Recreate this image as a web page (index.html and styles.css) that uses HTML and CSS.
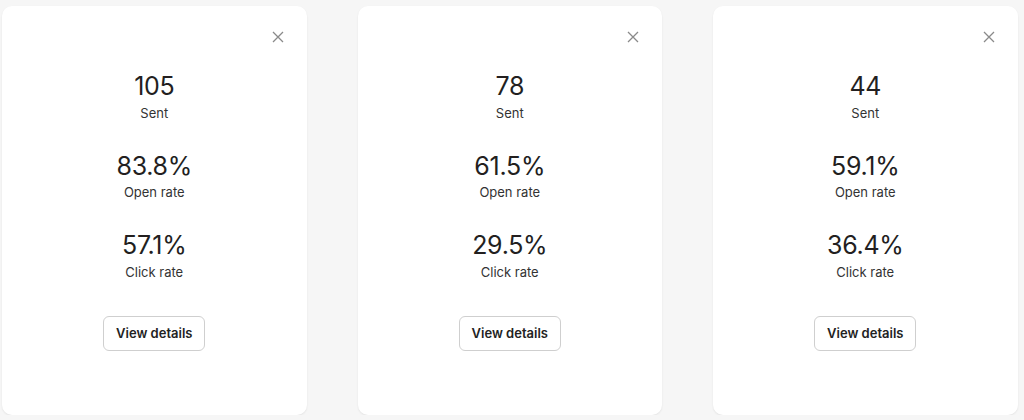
FILE: index.html
```html
<!DOCTYPE html>
<html lang="en">
<head>
  <meta charset="UTF-8">
  <title>Campaign stats</title>
  <link rel="stylesheet" href="styles.css">
</head>
<body>
  <div class="cards">
    <div class="card">
      <button class="close" aria-label="Close">
        <svg width="12" height="12" viewBox="0 0 12 12"><path d="M1 1L11 11M11 1L1 11" stroke="#8a8a8a" stroke-width="1.3" fill="none"/></svg>
      </button>
      <div class="stat"><div class="num">105</div><div class="label">Sent</div></div>
      <div class="stat"><div class="num">83.8%</div><div class="label">Open rate</div></div>
      <div class="stat"><div class="num">57.1%</div><div class="label">Click rate</div></div>
      <button class="details">View details</button>
    </div>
    <div class="card">
      <button class="close" aria-label="Close">
        <svg width="12" height="12" viewBox="0 0 12 12"><path d="M1 1L11 11M11 1L1 11" stroke="#8a8a8a" stroke-width="1.3" fill="none"/></svg>
      </button>
      <div class="stat"><div class="num">78</div><div class="label">Sent</div></div>
      <div class="stat"><div class="num">61.5%</div><div class="label">Open rate</div></div>
      <div class="stat"><div class="num">29.5%</div><div class="label">Click rate</div></div>
      <button class="details">View details</button>
    </div>
    <div class="card">
      <button class="close" aria-label="Close">
        <svg width="12" height="12" viewBox="0 0 12 12"><path d="M1 1L11 11M11 1L1 11" stroke="#8a8a8a" stroke-width="1.3" fill="none"/></svg>
      </button>
      <div class="stat"><div class="num">44</div><div class="label">Sent</div></div>
      <div class="stat"><div class="num">59.1%</div><div class="label">Open rate</div></div>
      <div class="stat"><div class="num">36.4%</div><div class="label">Click rate</div></div>
      <button class="details">View details</button>
    </div>
  </div>
</body>
</html>
```

FILE: styles.css
```css
body { margin: 0; background: #f6f6f6; font-family: Inter, "Liberation Sans", Arial, sans-serif; color: #222; }
.cards { display: flex; gap: 51px; padding: 6px 0 0 2px; }
.card { position: relative; width: 304.5px; height: 409px; box-sizing: border-box; background: #fff; border-radius: 10px; box-shadow: 0 1px 2px rgba(0,0,0,0.08); display: flex; flex-direction: column; align-items: center; padding-top: 65px; }
.close { position: absolute; top: 25px; right: 23px; background: none; border: none; padding: 0; width: 12px; height: 12px; cursor: pointer; }
.close svg { display: block; }
.stat { text-align: center; height: 79.5px; }
.num { font-size: 25px; line-height: 30px; letter-spacing: -0.3px; color: #231f1f; }
.label { font-size: 13px; line-height: 16px; margin-top: 3.5px; color: #333; }
.details { margin-top: 6px; width: 102px; height: 35px; background: #fff; border: 1px solid #cfcfcf; border-radius: 6px; font-family: inherit; font-size: 13px; font-weight: 600; color: #222; cursor: pointer; }
```
